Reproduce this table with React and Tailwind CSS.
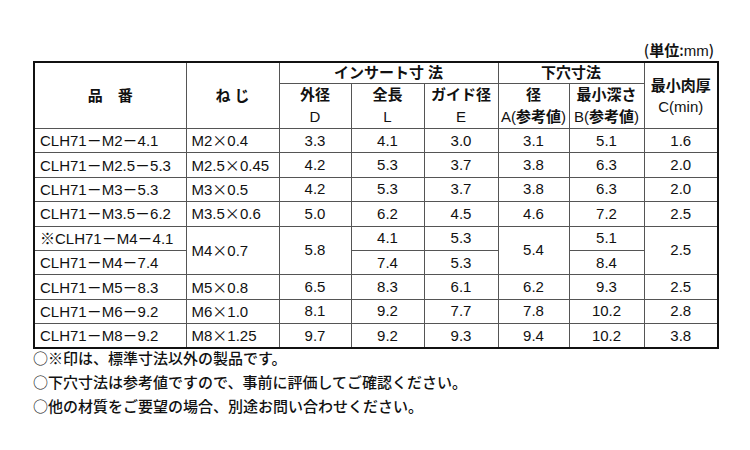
import React from "react";

const CJK = "font-['Noto_Sans_CJK_JP']";

function T({ s }) {
  return s.split(/([－×※])/).map((p, i) =>
    /[－×※]/.test(p) ? (
      <span key={i} className={CJK + (p === "－" ? " font-medium" : "")}>
        {p}
      </span>
    ) : (
      <React.Fragment key={i}>{p}</React.Fragment>
    )
  );
}

const rows = [
  ["CLH71－M2－4.1", "M2×0.4", "3.3", "4.1", "3.0", "3.1", "5.1", "1.6"],
  ["CLH71－M2.5－5.3", "M2.5×0.45", "4.2", "5.3", "3.7", "3.8", "6.3", "2.0"],
  ["CLH71－M3－5.3", "M3×0.5", "4.2", "5.3", "3.7", "3.8", "6.3", "2.0"],
  ["CLH71－M3.5－6.2", "M3.5×0.6", "5.0", "6.2", "4.5", "4.6", "7.2", "2.5"],
];
const rows2 = [
  ["CLH71－M5－8.3", "M5×0.8", "6.5", "8.3", "6.1", "6.2", "9.3", "2.5"],
  ["CLH71－M6－9.2", "M6×1.0", "8.1", "9.2", "7.7", "7.8", "10.2", "2.8"],
  ["CLH71－M8－9.2", "M8×1.25", "9.7", "9.2", "9.3", "9.4", "10.2", "3.8"],
];

const td = "border border-[#555] p-0 align-middle";
const tdL = td + " text-left pl-[5px] whitespace-nowrap";
const tdC = td + " text-center";

function Row({ r }) {
  return (
    <tr className="h-[24.4px]">
      <td className={tdL}>
        <T s={r[0]} />
      </td>
      <td className={tdL}>
        <T s={r[1]} />
      </td>
      {r.slice(2).map((v, i) => (
        <td key={i} className={tdC}>
          {v}
        </td>
      ))}
    </tr>
  );
}

function Circ() {
  return <span className={CJK + " font-normal"}>○</span>;
}

export default function App() {
  return (
    <div
      className="w-[750px] h-[450px] bg-white text-[#111] overflow-hidden"
      style={{ fontFamily: '"Liberation Sans", "Noto Sans CJK JP", sans-serif' }}
    >
      <div className="ml-[33px] w-[684px] pt-[38px]">
        <div className="h-[23px] leading-[23px] text-[15px] text-right pr-[3px] font-medium">
          <span className={CJK}>(</span>
          <span className="font-bold">単位</span>
          <span className={CJK}>:</span>mm<span className={CJK}>)</span>
        </div>
        <table className="w-[684px] table-fixed border-collapse border-2 border-[#111] text-[15px] leading-[20px]">
          <colgroup>
            <col className="w-[152px]" />
            <col className="w-[93px]" />
            <col className="w-[72px]" />
            <col className="w-[73px]" />
            <col className="w-[74px]" />
            <col className="w-[71px]" />
            <col className="w-[75px]" />
            <col className="w-[74px]" />
          </colgroup>
          <thead>
            <tr className="h-[20px]">
              <th rowSpan={2} className={tdC + " font-bold"}>
                品　番
              </th>
              <th rowSpan={2} className={tdC + " font-bold"}>
                ね じ
              </th>
              <th colSpan={3} className={tdC + " font-bold"}>
                インサート寸 法
              </th>
              <th colSpan={2} className={tdC + " font-bold"}>
                下穴寸法
              </th>
              <th rowSpan={2} className={tdC + " font-normal leading-[21px]"}>
                <div className="font-bold">最小肉厚</div>
                <div>C(min)</div>
              </th>
            </tr>
            <tr className="h-[41px]">
              <th className={tdC + " font-normal leading-[22px]"}>
                <div className="font-bold">外径</div>
                <div>D</div>
              </th>
              <th className={tdC + " font-normal leading-[22px]"}>
                <div className="font-bold">全長</div>
                <div>L</div>
              </th>
              <th className={tdC + " font-normal leading-[22px]"}>
                <div className="font-bold">ガイド径</div>
                <div>E</div>
              </th>
              <th className={tdC + " font-normal leading-[22px] whitespace-nowrap"}>
                <div className="font-bold">径</div>
                <div>
                  A(<span className="font-bold">参考値</span>)
                </div>
              </th>
              <th className={tdC + " font-normal leading-[22px] whitespace-nowrap"}>
                <div className="font-bold">最小深さ</div>
                <div>
                  B(<span className="font-bold">参考値</span>)
                </div>
              </th>
            </tr>
          </thead>
          <tbody>
            {rows.map((r, i) => (
              <Row key={i} r={r} />
            ))}
            <tr className="h-[24.4px]">
              <td className={tdL}>
                <T s="※CLH71－M4－4.1" />
              </td>
              <td rowSpan={2} className={tdL}>
                <T s="M4×0.7" />
              </td>
              <td rowSpan={2} className={tdC}>
                5.8
              </td>
              <td className={tdC}>4.1</td>
              <td className={tdC}>5.3</td>
              <td rowSpan={2} className={tdC}>
                5.4
              </td>
              <td className={tdC}>5.1</td>
              <td rowSpan={2} className={tdC}>
                2.5
              </td>
            </tr>
            <tr className="h-[24.4px]">
              <td className={tdL}>
                <T s="CLH71－M4－7.4" />
              </td>
              <td className={tdC}>7.4</td>
              <td className={tdC}>5.3</td>
              <td className={tdC}>8.4</td>
            </tr>
            {rows2.map((r, i) => (
              <Row key={i} r={r} />
            ))}
          </tbody>
        </table>
        <div className="text-[15px] leading-[23px] font-medium -mt-[3px]">
          <div>
            <Circ />※印は、標準寸法以外の製品です。
          </div>
          <div>
            <Circ />下穴寸法は参考値ですので、事前に評価してご確認ください。
          </div>
          <div>
            <Circ />他の材質をご要望の場合、別途お問い合わせください。
          </div>
        </div>
      </div>
    </div>
  );
}
